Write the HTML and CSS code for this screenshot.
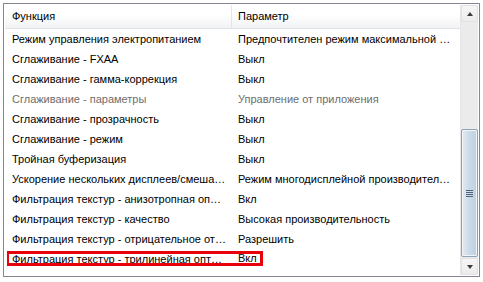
FILE: index.html
```html
<!DOCTYPE html>
<html lang="ru">
  <head>
    <meta charset="UTF-8" />
    <title>Параметры 3D</title>
    <link rel="stylesheet" href="styles.css">
  </head>
  <body>
    <div class="list-box">
      <div class="list-view">
        <div class="row header">
          <div class="cell col-func">Функция</div>
          <div class="cell col-param">Параметр</div>
        </div>
        <div class="row"><div class="cell col-func">Режим управления электропитанием</div><div class="cell col-param">Предпочтителен режим максимальной производительности</div></div>
        <div class="row"><div class="cell col-func">Сглаживание - FXAA</div><div class="cell col-param">Выкл</div></div>
        <div class="row"><div class="cell col-func">Сглаживание - гамма-коррекция</div><div class="cell col-param">Выкл</div></div>
        <div class="row disabled"><div class="cell col-func">Сглаживание - параметры</div><div class="cell col-param">Управление от приложения</div></div>
        <div class="row"><div class="cell col-func">Сглаживание - прозрачность</div><div class="cell col-param">Выкл</div></div>
        <div class="row"><div class="cell col-func">Сглаживание - режим</div><div class="cell col-param">Выкл</div></div>
        <div class="row"><div class="cell col-func">Тройная буферизация</div><div class="cell col-param">Выкл</div></div>
        <div class="row"><div class="cell col-func">Ускорение нескольких дисплеев/смешанных ГП</div><div class="cell col-param">Режим многодисплейной производительности</div></div>
        <div class="row"><div class="cell col-func">Фильтрация текстур - анизотропная оптимизация</div><div class="cell col-param">Вкл</div></div>
        <div class="row"><div class="cell col-func">Фильтрация текстур - качество</div><div class="cell col-param">Высокая производительность</div></div>
        <div class="row"><div class="cell col-func">Фильтрация текстур - отрицательное отклонение УД</div><div class="cell col-param">Разрешить</div></div>
        <div class="row marked">
          <div class="mark">
            <div class="cell col-func">Фильтрация текстур - трилинейная оптимизация</div>
            <div class="cell col-param">Вкл</div>
          </div>
        </div>
      </div>
      <div class="scrollbar">
        <div class="sb-button"><span class="arrow up"></span></div>
        <div class="sb-track"><div class="sb-thumb"><span class="grip"></span></div></div>
        <div class="sb-button"><span class="arrow down"></span></div>
      </div>
    </div>
  </body>
</html>
```

FILE: styles.css
```css
body {
  margin: 0;
  padding: 3px;
  background: #fff;
  font-family: "Liberation Sans", Arial, sans-serif;
  font-size: 11px;
  color: #000;
}

.list-box {
  display: flex;
  width: 473px;
  height: 270px;
  border: 1px solid #828790;
  padding: 1px;
  background: #fff;
}

.list-view {
  flex: 1;
  min-width: 0;
  overflow: hidden;
}

.row {
  display: flex;
  height: 20px;
  line-height: 20px;
}

.cell {
  white-space: nowrap;
  overflow: hidden;
  text-overflow: ellipsis;
  box-sizing: border-box;
}

.col-func {
  width: 227px;
  flex: none;
  padding: 0 6px 0 7px;
}

.col-param {
  flex: 1;
  min-width: 0;
  padding: 0 6px;
}

.header {
  height: 24px;
  line-height: 22px;
  background: linear-gradient(#fff, #fff 40%, #f2f3f5);
  border-bottom: 1px solid #e0e2e6;
  box-sizing: border-box;
}

.header .col-func {
  border-right: 1px solid #e3e6ea;
}

.disabled {
  color: #6d6d6d;
}

.mark {
  display: flex;
  height: 15px;
  margin: 2px 0 0 2px;
  border: 3px solid #e8000b;
  border-left-width: 2px;
  box-sizing: border-box;
  line-height: 9px;
}

.mark .cell {
  overflow: visible;
}

.mark .col-func {
  width: 223px;
  padding: 0 6px 0 3px;
  overflow: hidden;
  line-height: 10px;
  height: 9px;
}

.mark .col-param {
  flex: none;
  padding: 0 3px 0 6px;
}

.scrollbar {
  width: 17px;
  display: flex;
  flex-direction: column;
  background: #ebebeb;
  border-left: 1px solid #e6e6e6;
}

.sb-button {
  height: 17px;
  display: flex;
  align-items: center;
  justify-content: center;
  background: linear-gradient(#f6f6f6, #ececec);
  border: 1px solid #e2e2e2;
  border-radius: 2px;
  box-sizing: border-box;
}

.arrow {
  width: 0;
  height: 0;
  border-left: 3px solid transparent;
  border-right: 3px solid transparent;
}

.arrow.up {
  border-bottom: 4px solid #3c3c3c;
}

.arrow.down {
  border-top: 4px solid #3c3c3c;
}

.sb-track {
  flex: 1;
  display: flex;
  flex-direction: column;
  justify-content: flex-end;
  padding: 0 0 1px;
}

.sb-thumb {
  height: 126px;
  border: 1px solid #8fa3b8;
  border-radius: 2px;
  background: linear-gradient(to right, #e3ebf2, #cddbe8 45%, #bccfe1);
  display: flex;
  align-items: center;
  justify-content: center;
  box-shadow: inset 0 0 0 1px #f2f6fa;
}

.grip {
  width: 7px;
  height: 7px;
  background: repeating-linear-gradient(#4c6379 0 1px, transparent 1px 2px);
}
```
